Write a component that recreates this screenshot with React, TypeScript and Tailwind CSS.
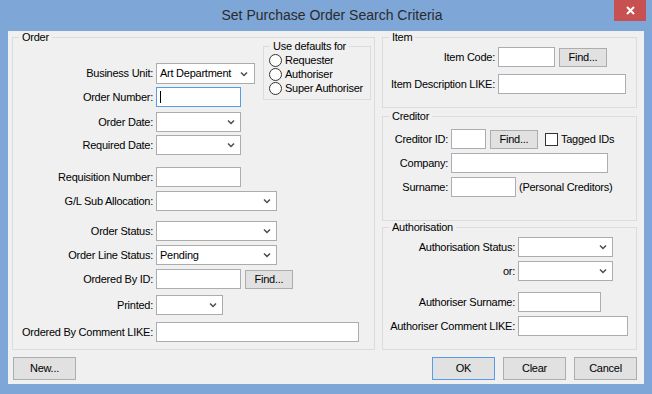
import type { ReactNode } from 'react';

function Chevron() {
  return (
    <svg width="8" height="6" viewBox="0 0 8 6" className="shrink-0">
      <path d="M1 1.5l3 3 3-3" stroke="#4d4d4d" strokeWidth="1.5" fill="none" />
    </svg>
  );
}

function Select({ w, value }: { w: string; value?: string }) {
  return (
    <div className={`flex h-[20px] items-center justify-between border border-[#acacac] bg-white pl-[3px] pr-[5px] ${w}`}>
      <span>{value}</span>
      <Chevron />
    </div>
  );
}

function TextBox({ w, focused }: { w: string; focused?: boolean }) {
  return (
    <div className={`flex h-[20px] items-center border bg-white pl-[3px] ${w} ${focused ? 'border-[#569de5]' : 'border-[#abadb3]'}`}>
      {focused && <span className="h-[12px] w-px bg-black" />}
    </div>
  );
}

function Button({ label, w, primary }: { label: string; w: string; primary?: boolean }) {
  return (
    <div className={`flex items-center justify-center border bg-[#e1e1e1] ${w} ${primary ? 'border-[#569de5]' : 'border-[#adadad]'}`}>
      {label}
    </div>
  );
}

function Group({ title, className, children }: { title: string; className: string; children: ReactNode }) {
  return (
    <div className={`relative border border-[#dcdcdc] ${className}`}>
      <span className="absolute -top-[7px] left-[6px] bg-[#f0f0f0] px-[3px] leading-[13px]">{title}</span>
      {children}
    </div>
  );
}

function Row({ label, lw, className = '', children }: { label: string; lw: string; className?: string; children: ReactNode }) {
  return (
    <div className={`flex items-center ${className}`}>
      <span className={`shrink-0 text-right ${lw}`}>{label}</span>
      <div className="ml-[3px] flex items-center">{children}</div>
    </div>
  );
}

function Radio({ label }: { label: string }) {
  return (
    <div className="flex h-[14px] items-center">
      <span className="h-[13px] w-[13px] rounded-full border border-[#333] bg-white" />
      <span className="ml-[3px]">{label}</span>
    </div>
  );
}

export default function App() {
  return (
    <div className="flex h-[394px] w-[652px] flex-col bg-[#7ea6d7] font-['Liberation_Sans',Arial,sans-serif] text-[11px] tracking-[-0.25px] text-black">
      {/* Title bar */}
      <div className="relative flex h-[31px] items-center justify-center pl-[12px]">
        <span className="text-[14px] tracking-normal text-[#2b2b2b]">Set Purchase Order Search Criteria</span>
        <div className="absolute right-[6px] top-0 flex h-[21px] w-[32px] items-center justify-center bg-[#c75050]">
          <svg width="9" height="9" viewBox="0 0 9 9">
            <path d="M1 1l7 7M8 1l-7 7" stroke="white" strokeWidth="2" />
          </svg>
        </div>
      </div>

      {/* Client area */}
      <div className="mx-[8px] flex h-[353px] flex-col bg-[#f0f0f0] pl-[4px] pr-[7px] pt-[6px]">
        <div className="flex gap-[7px]">
          {/* Order */}
          <Group title="Order" className="h-[313px] w-[363px]">
            <div className="flex items-start">
              <div className="flex flex-col pt-[25px]">
                <Row label="Business Unit:" lw="w-[140px]">
                  <div className="flex h-[21px] w-[99px] items-center justify-between border border-[#acacac] bg-white pl-[3px] pr-[6px]">
                    <span>Art Department</span>
                    <Chevron />
                  </div>
                </Row>
                <Row label="Order Number:" lw="w-[140px]" className="mt-[3px]">
                  <TextBox w="w-[85px]" focused />
                </Row>
                <Row label="Order Date:" lw="w-[140px]" className="mt-[5px]">
                  <Select w="w-[85px]" />
                </Row>
                <Row label="Required Date:" lw="w-[140px]" className="mt-[3px]">
                  <Select w="w-[85px]" />
                </Row>
              </div>
              <Group title="Use defaults for" className="ml-[8px] mt-[8px] h-[54px] w-[108px]">
                <div className="flex flex-col pl-[5px] pt-[6px]">
                  <Radio label="Requester" />
                  <Radio label="Authoriser" />
                  <Radio label="Super Authoriser" />
                </div>
              </Group>
            </div>
            <div className="flex flex-col">
              <Row label="Requisition Number:" lw="w-[140px]" className="mt-[12px]">
                <TextBox w="w-[85px]" />
              </Row>
              <Row label="G/L Sub Allocation:" lw="w-[140px]" className="mt-[4px]">
                <Select w="w-[121px]" />
              </Row>
              <Row label="Order Status:" lw="w-[140px]" className="mt-[10px]">
                <Select w="w-[121px]" />
              </Row>
              <Row label="Order Line Status:" lw="w-[140px]" className="mt-[4px]">
                <Select w="w-[121px]" value="Pending" />
              </Row>
              <Row label="Ordered By ID:" lw="w-[140px]" className="mt-[4px]">
                <TextBox w="w-[85px]" />
                <Button label="Find..." w="ml-[4px] h-[19px] w-[48px]" />
              </Row>
              <Row label="Printed:" lw="w-[140px]" className="mt-[6px]">
                <Select w="w-[67px]" />
              </Row>
              <Row label="Ordered By Comment LIKE:" lw="w-[140px]" className="mt-[7px]">
                <TextBox w="w-[203px]" />
              </Row>
            </div>
          </Group>

          {/* Right column */}
          <div className="flex w-[255px] flex-col">
            <Group title="Item" className="h-[71px]">
              <div className="flex flex-col pt-[9px]">
                <Row label="Item Code:" lw="w-[112px]">
                  <TextBox w="w-[57px]" />
                  <Button label="Find..." w="ml-[4px] h-[19px] w-[48px]" />
                </Row>
                <Row label="Item Description LIKE:" lw="w-[112px]" className="mt-[7px]">
                  <TextBox w="w-[128px]" />
                </Row>
              </div>
            </Group>

            <Group title="Creditor" className="mt-[8px] h-[105px]">
              <div className="flex flex-col pt-[12px]">
                <Row label="Creditor ID:" lw="w-[65px]">
                  <TextBox w="w-[35px]" />
                  <Button label="Find..." w="ml-[4px] h-[19px] w-[48px]" />
                  <span className="ml-[7px] h-[13px] w-[13px] border border-[#333] bg-white" />
                  <span className="ml-[3px]">Tagged IDs</span>
                </Row>
                <Row label="Company:" lw="w-[65px]" className="mt-[4px]">
                  <TextBox w="w-[157px]" />
                </Row>
                <Row label="Surname:" lw="w-[65px]" className="mt-[4px]">
                  <TextBox w="w-[65px]" />
                  <span className="ml-[3px]">(Personal Creditors)</span>
                </Row>
              </div>
            </Group>

            <Group title="Authorisation" className="mt-[6px] h-[123px]">
              <div className="flex flex-col pt-[9px]">
                <Row label="Authorisation Status:" lw="w-[132px]">
                  <Select w="w-[95px]" />
                </Row>
                <Row label="or:" lw="w-[132px]" className="mt-[4px]">
                  <Select w="w-[95px]" />
                </Row>
                <Row label="Authoriser Surname:" lw="w-[132px]" className="mt-[11px]">
                  <TextBox w="w-[83px]" />
                </Row>
                <Row label="Authoriser Comment LIKE:" lw="w-[132px]" className="mt-[4px]">
                  <TextBox w="w-[110px]" />
                </Row>
              </div>
            </Group>
          </div>
        </div>

        {/* Buttons */}
        <div className="mt-[7px] flex h-[23px] items-stretch">
          <Button label="New..." w="ml-[1px] w-[63px]" />
          <div className="ml-auto flex gap-[8px]">
            <Button label="OK" w="w-[63px]" primary />
            <Button label="Clear" w="w-[63px]" />
            <Button label="Cancel" w="w-[63px]" />
          </div>
        </div>
      </div>
    </div>
  );
}
